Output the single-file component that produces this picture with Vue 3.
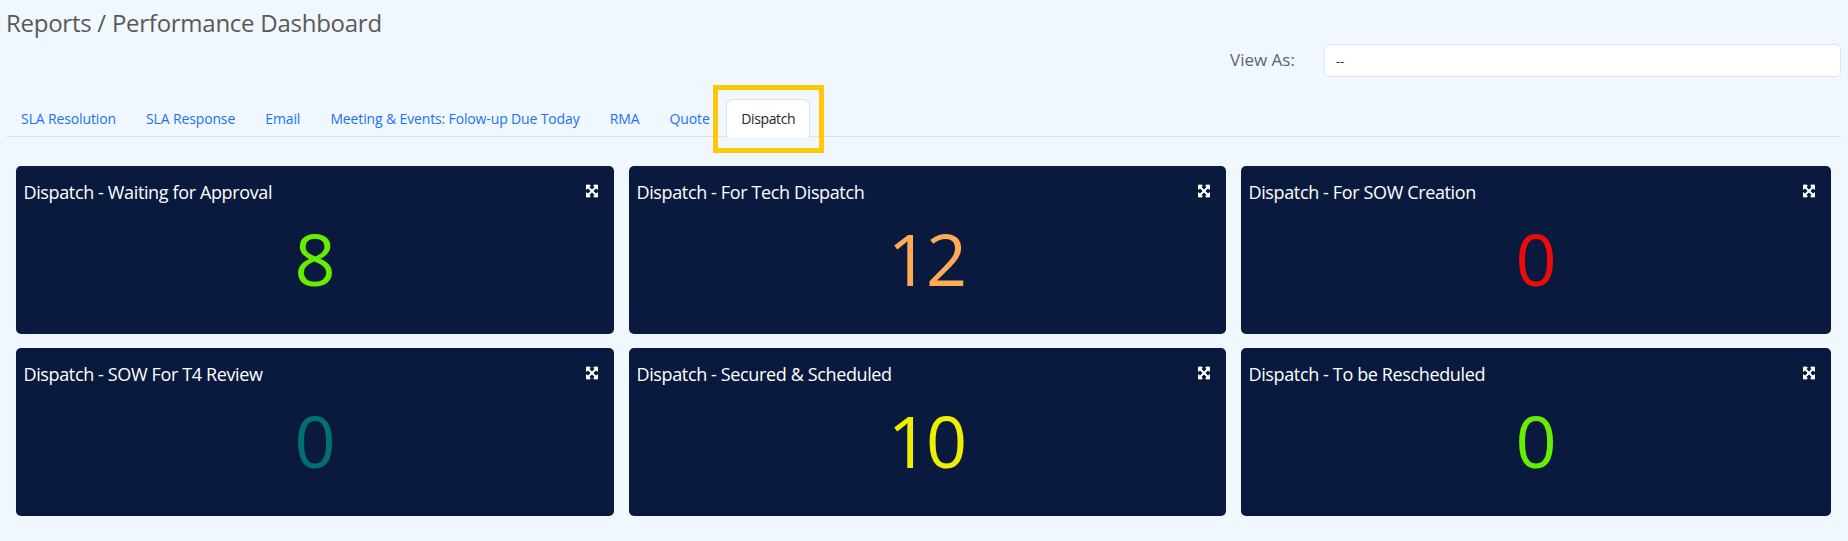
<template>
  <div class="page">
    <div class="page-head">
      <h1 class="page-title">Reports / Performance Dashboard</h1>
      <div class="view-as">
        <label class="view-label">View As:</label>
        <div class="view-select">--</div>
      </div>
    </div>

    <ul class="tabs">
      <li
        v-for="tab in tabs"
        :key="tab"
        class="tab"
        :class="{ active: tab === activeTab }"
      >
        {{ tab }}
        <span v-if="tab === activeTab" class="tab-highlight"></span>
      </li>
    </ul>

    <div class="cards">
      <div v-for="card in cards" :key="card.title" class="card">
        <div class="card-head">
          <span class="card-title">{{ card.title }}</span>
          <svg class="card-expand" viewBox="0 0 448 512" fill="currentColor" stroke="currentColor" stroke-width="30">
            <path d="M448 344v112a23.94 23.94 0 0 1-24 24H312c-21.39 0-32.09-25.9-17-41l36.2-36.2L224 295.6 116.77 402.9 153 439c15.09 15.1 4.39 41-17 41H24a23.94 23.94 0 0 1-24-24V344c0-21.4 25.89-32.1 41-17l36.19 36.2L184.46 256 77.18 148.7 41 185c-15.1 15.1-41 4.4-41-17V56a23.94 23.94 0 0 1 24-24h112c21.39 0 32.09 25.9 17 41l-36.2 36.2L224 216.4l107.23-107.3L295 73c-15.09-15.1-4.39-41 17-41h112a23.94 23.94 0 0 1 24 24v112c0 21.4-25.89 32.1-41 17l-36.19-36.2L263.54 256l107.28 107.3L407 327.1c15.1-15.2 41-4.5 41 16.9z" />
          </svg>
        </div>
        <div class="card-value" :style="{ color: card.color }">{{ card.value }}</div>
      </div>
    </div>
  </div>
</template>

<script setup>
const activeTab = 'Dispatch'

const tabs = [
  'SLA Resolution',
  'SLA Response',
  'Email',
  'Meeting & Events: Folow-up Due Today',
  'RMA',
  'Quote',
  'Dispatch'
]

const cards = [
  { title: 'Dispatch - Waiting for Approval', value: 8, color: '#66ee00' },
  { title: 'Dispatch - For Tech Dispatch', value: 12, color: '#ffaa55' },
  { title: 'Dispatch - For SOW Creation', value: 0, color: '#ee0a0a' },
  { title: 'Dispatch - SOW For T4 Review', value: 0, color: '#007070' },
  { title: 'Dispatch - Secured & Scheduled', value: 10, color: '#eeee00' },
  { title: 'Dispatch - To be Rescheduled', value: 0, color: '#66ee00' }
]
</script>

<style>
html, body {
  margin: 0;
  background: #f0f7ff;
}
</style>

<style scoped>
.page {
  height: 541px;
  box-sizing: border-box;
  padding: 9px 7px 0 6px;
  background: #f0f7ff;
  font-family: "Open Sans", "Noto Sans", sans-serif;
  overflow: hidden;
}

.page-head {
  height: 91px;
  display: flex;
  justify-content: space-between;
}

.page-title {
  margin: 0;
  font-size: 24px;
  line-height: 28px;
  letter-spacing: -0.26px;
  font-weight: 400;
  color: #595959;
}

.view-as {
  display: flex;
  align-items: center;
  height: 34px;
  margin-top: 34px;
}

.view-label {
  width: 94px;
  margin-bottom: 2px;
  font-size: 17px;
  color: #5c6470;
}

.view-select {
  width: 517px;
  height: 33px;
  box-sizing: border-box;
  padding: 0 11px;
  border: 1px solid #dee5ee;
  border-radius: 5px;
  background: #fff;
  font-size: 13px;
  line-height: 33px;
  color: #333;
}

.tabs {
  display: flex;
  height: 36px;
  margin: 0;
  padding: 0;
  list-style: none;
  border-bottom: 1px solid #dee2e6;
}

.tab {
  position: relative;
  height: 36px;
  box-sizing: border-box;
  padding: 0 14.1px;
  border: 1px solid transparent;
  border-bottom: 0;
  font-size: 14px;
  letter-spacing: -0.14px;
  line-height: 36px;
  color: #1a73f5;
  white-space: nowrap;
}

.tab.active {
  height: 38px;
  margin: -1px 0 0 1.5px;
  border-color: #dee2e6;
  border-radius: 7px 7px 0 0;
  background: #fff;
  letter-spacing: -0.4px;
  line-height: 38px;
  color: #212529;
}

.tab-highlight {
  position: absolute;
  top: -15px;
  left: -14px;
  right: -15px;
  bottom: -16px;
  border: 5px solid #fec805;
  pointer-events: none;
}

.cards {
  display: grid;
  grid-template-columns: 598fr 597fr 590fr;
  grid-auto-rows: 168px;
  gap: 14px 15px;
  margin: 29px 10px 0 10px;
}

.card {
  display: flex;
  flex-direction: column;
  border-radius: 5px;
  background: #0a1a3e;
  color: #fff;
}

.card-head {
  display: flex;
  justify-content: space-between;
  padding: 15px 16px 0 7.5px;
}

.card-title {
  font-size: 18px;
  letter-spacing: -0.37px;
  line-height: 22px;
}

.card-expand {
  width: 12px;
  height: 14px;
  margin-top: 3px;
}

.card-value {
  margin-top: 6px;
  padding-right: 3px;
  text-align: center;
  font-size: 72px;
  letter-spacing: -3px;
  line-height: 98px;
}
</style>
